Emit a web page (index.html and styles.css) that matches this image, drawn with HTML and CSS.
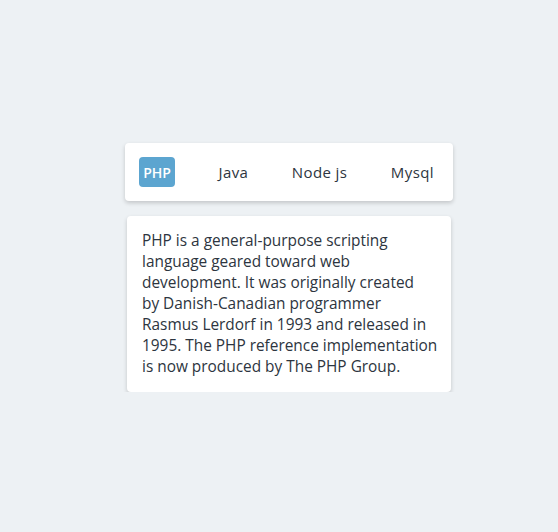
FILE: index.html
```html
<!DOCTYPE html>
<html>
<head>
<meta charset="utf-8">
<link rel="stylesheet" href="styles.css">
</head>
<body>
<div class="wrap">
  <div class="tabs">
    <button class="tab active">PHP</button>
    <button class="tab">Java</button>
    <button class="tab">Node js</button>
    <button class="tab">Mysql</button>
  </div>
  <div class="panel">
    <p>PHP is a general-purpose scripting<br>language geared toward web<br>development. It was originally created<br>by Danish-Canadian programmer<br>Rasmus Lerdorf in 1993 and released in<br>1995. The PHP reference implementation<br>is now produced by The PHP Group.</p>
  </div>
</div>
</body>
</html>
```
FILE: styles.css
```css
html, body {
  margin: 0;
  padding: 0;
  background: #edf1f4;
  font-family: "Open Sans", sans-serif;
}
.wrap {
  width: 328px;
  margin: 143px 0 0 125px;
  display: flex;
  flex-direction: column;
  align-items: center;
}
.tabs {
  box-sizing: border-box;
  width: 328px;
  height: 58px;
  background: #fff;
  border-radius: 4px;
  box-shadow: 0 2px 4px rgba(0,0,0,0.18);
  display: flex;
  align-items: center;
  justify-content: space-between;
  padding: 0 19px 0 14px;
}
.tab {
  font-family: inherit;
  font-size: 15px;
  letter-spacing: 0.4px;
  color: #2d3540;
  background: none;
  border: none;
  border-radius: 4px;
  height: 30px;
  padding: 0;
  cursor: pointer;
}
.tab.active {
  width: 36px;
  background: #5ca5d0;
  color: #fff;
  font-size: 14px;
  letter-spacing: 0;
  font-weight: 600;
}
.panel {
  box-sizing: border-box;
  width: 324px;
  margin-top: 15px;
  background: #fff;
  border-radius: 4px;
  box-shadow: 0 2px 4px rgba(0,0,0,0.18);
  padding: 14px 15px 15px 15px;
}
.panel p {
  margin: 0;
  font-size: 15.4px;
  line-height: 21px;
  color: #2d3540;
  white-space: nowrap;
}
```
